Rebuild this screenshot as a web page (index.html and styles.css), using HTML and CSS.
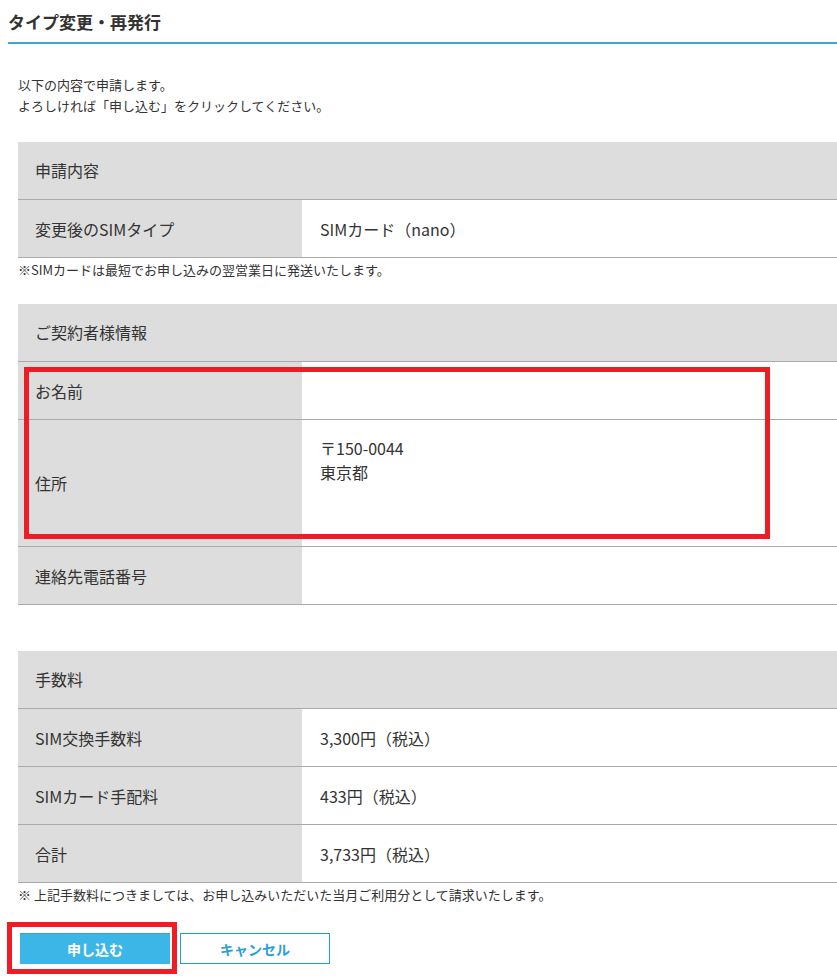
FILE: index.html
```html
<html>

<head>
    <meta charset="utf-8">
    <link rel="stylesheet" href="styles.css">
</head>

<body>
    <h1 class="title">タイプ変更・再発行</h1>
    <div class="content">
        <p class="intro">以下の内容で申請します。<br>よろしければ「申し込む」をクリックしてください。</p>

        <div class="table">
            <div class="head">申請内容</div>
            <div class="row">
                <div class="label">変更後のSIMタイプ</div>
                <div class="value">SIMカード（nano）</div>
            </div>
        </div>
        <p class="note">※SIMカードは最短でお申し込みの翌営業日に発送いたします。</p>

        <div class="table gap">
            <div class="head">ご契約者様情報</div>
            <div class="highlight">
                <div class="row">
                    <div class="label">お名前</div>
                    <div class="value"></div>
                </div>
                <div class="row address">
                    <div class="label">住所</div>
                    <div class="value">〒150-0044<br>東京都</div>
                </div>
            </div>
            <div class="row">
                <div class="label">連絡先電話番号</div>
                <div class="value"></div>
            </div>
        </div>

        <div class="table gap-lg">
            <div class="head">手数料</div>
            <div class="row">
                <div class="label">SIM交換手数料</div>
                <div class="value">3,300円（税込）</div>
            </div>
            <div class="row">
                <div class="label">SIMカード手配料</div>
                <div class="value">433円（税込）</div>
            </div>
            <div class="row">
                <div class="label">合計</div>
                <div class="value">3,733円（税込）</div>
            </div>
        </div>
        <p class="note">※ 上記手数料につきましては、お申し込みいただいた当月ご利用分として請求いたします。</p>

        <div class="buttons">
            <span class="mark">
                <button class="btn primary">申し込む</button>
            </span>
            <button class="btn secondary">キャンセル</button>
        </div>
    </div>
</body>

</html>
```

FILE: styles.css
```css
body {
    margin: 0;
    color: #333;
    font-family: "Noto Sans CJK JP", "Noto Sans", sans-serif;
    background: #fff;
}

.title {
    margin: 0 0 0 8px;
    padding: 10px 0 8px 0;
    font-size: 17px;
    line-height: 24px;
    font-weight: bold;
    border-bottom: 2px solid #3aa7d5;
}

.content {
    padding-left: 18px;
}

.intro {
    margin: 30px 0 26px 0;
    font-size: 13px;
    line-height: 21px;
}

.table {
    font-size: 16px;
}

.gap {
    margin-top: 24px;
}

.gap-lg {
    margin-top: 46px;
}

.head {
    height: 57px;
    line-height: 57px;
    padding-left: 17px;
    background: #dddddd;
    border-bottom: 1px solid #aaaaaa;
}

.row {
    display: grid;
    grid-template-columns: 284px 1fr;
    height: 57px;
    border-bottom: 1px solid #aaaaaa;
}

.label {
    background: #dddddd;
    padding-left: 17px;
    display: flex;
    align-items: center;
}

.value {
    padding-left: 18px;
    display: flex;
    align-items: center;
}

.address {
    height: 126px;
}

.address .value {
    align-items: flex-start;
    padding-top: 16px;
    line-height: 24px;
}

.highlight {
    position: relative;
}

.highlight::after {
    content: "";
    position: absolute;
    top: 5px;
    left: 6px;
    width: 736px;
    bottom: 8px;
    border: 5px solid #ee1c25;
}

.note {
    margin: 1px 0 0 0;
    font-size: 13px;
    line-height: 21px;
}

.buttons {
    display: flex;
    gap: 10px;
    margin-top: 28px;
    padding-left: 2px;
}

.mark {
    position: relative;
    display: flex;
}

.mark::after {
    content: "";
    position: absolute;
    top: -11px;
    left: -13px;
    width: 160px;
    height: 42px;
    border: 5px solid #ee1c25;
}

.btn {
    width: 150px;
    height: 31px;
    font-family: inherit;
    font-size: 14px;
    font-weight: bold;
    cursor: pointer;
}

.primary {
    background: #3bb6e6;
    color: #fff;
    border: none;
    border-top: 1px solid #2fa4d4;
}

.secondary {
    background: #fff;
    color: #2a9fdc;
    border: 1px solid #1a9be2;
}
```
